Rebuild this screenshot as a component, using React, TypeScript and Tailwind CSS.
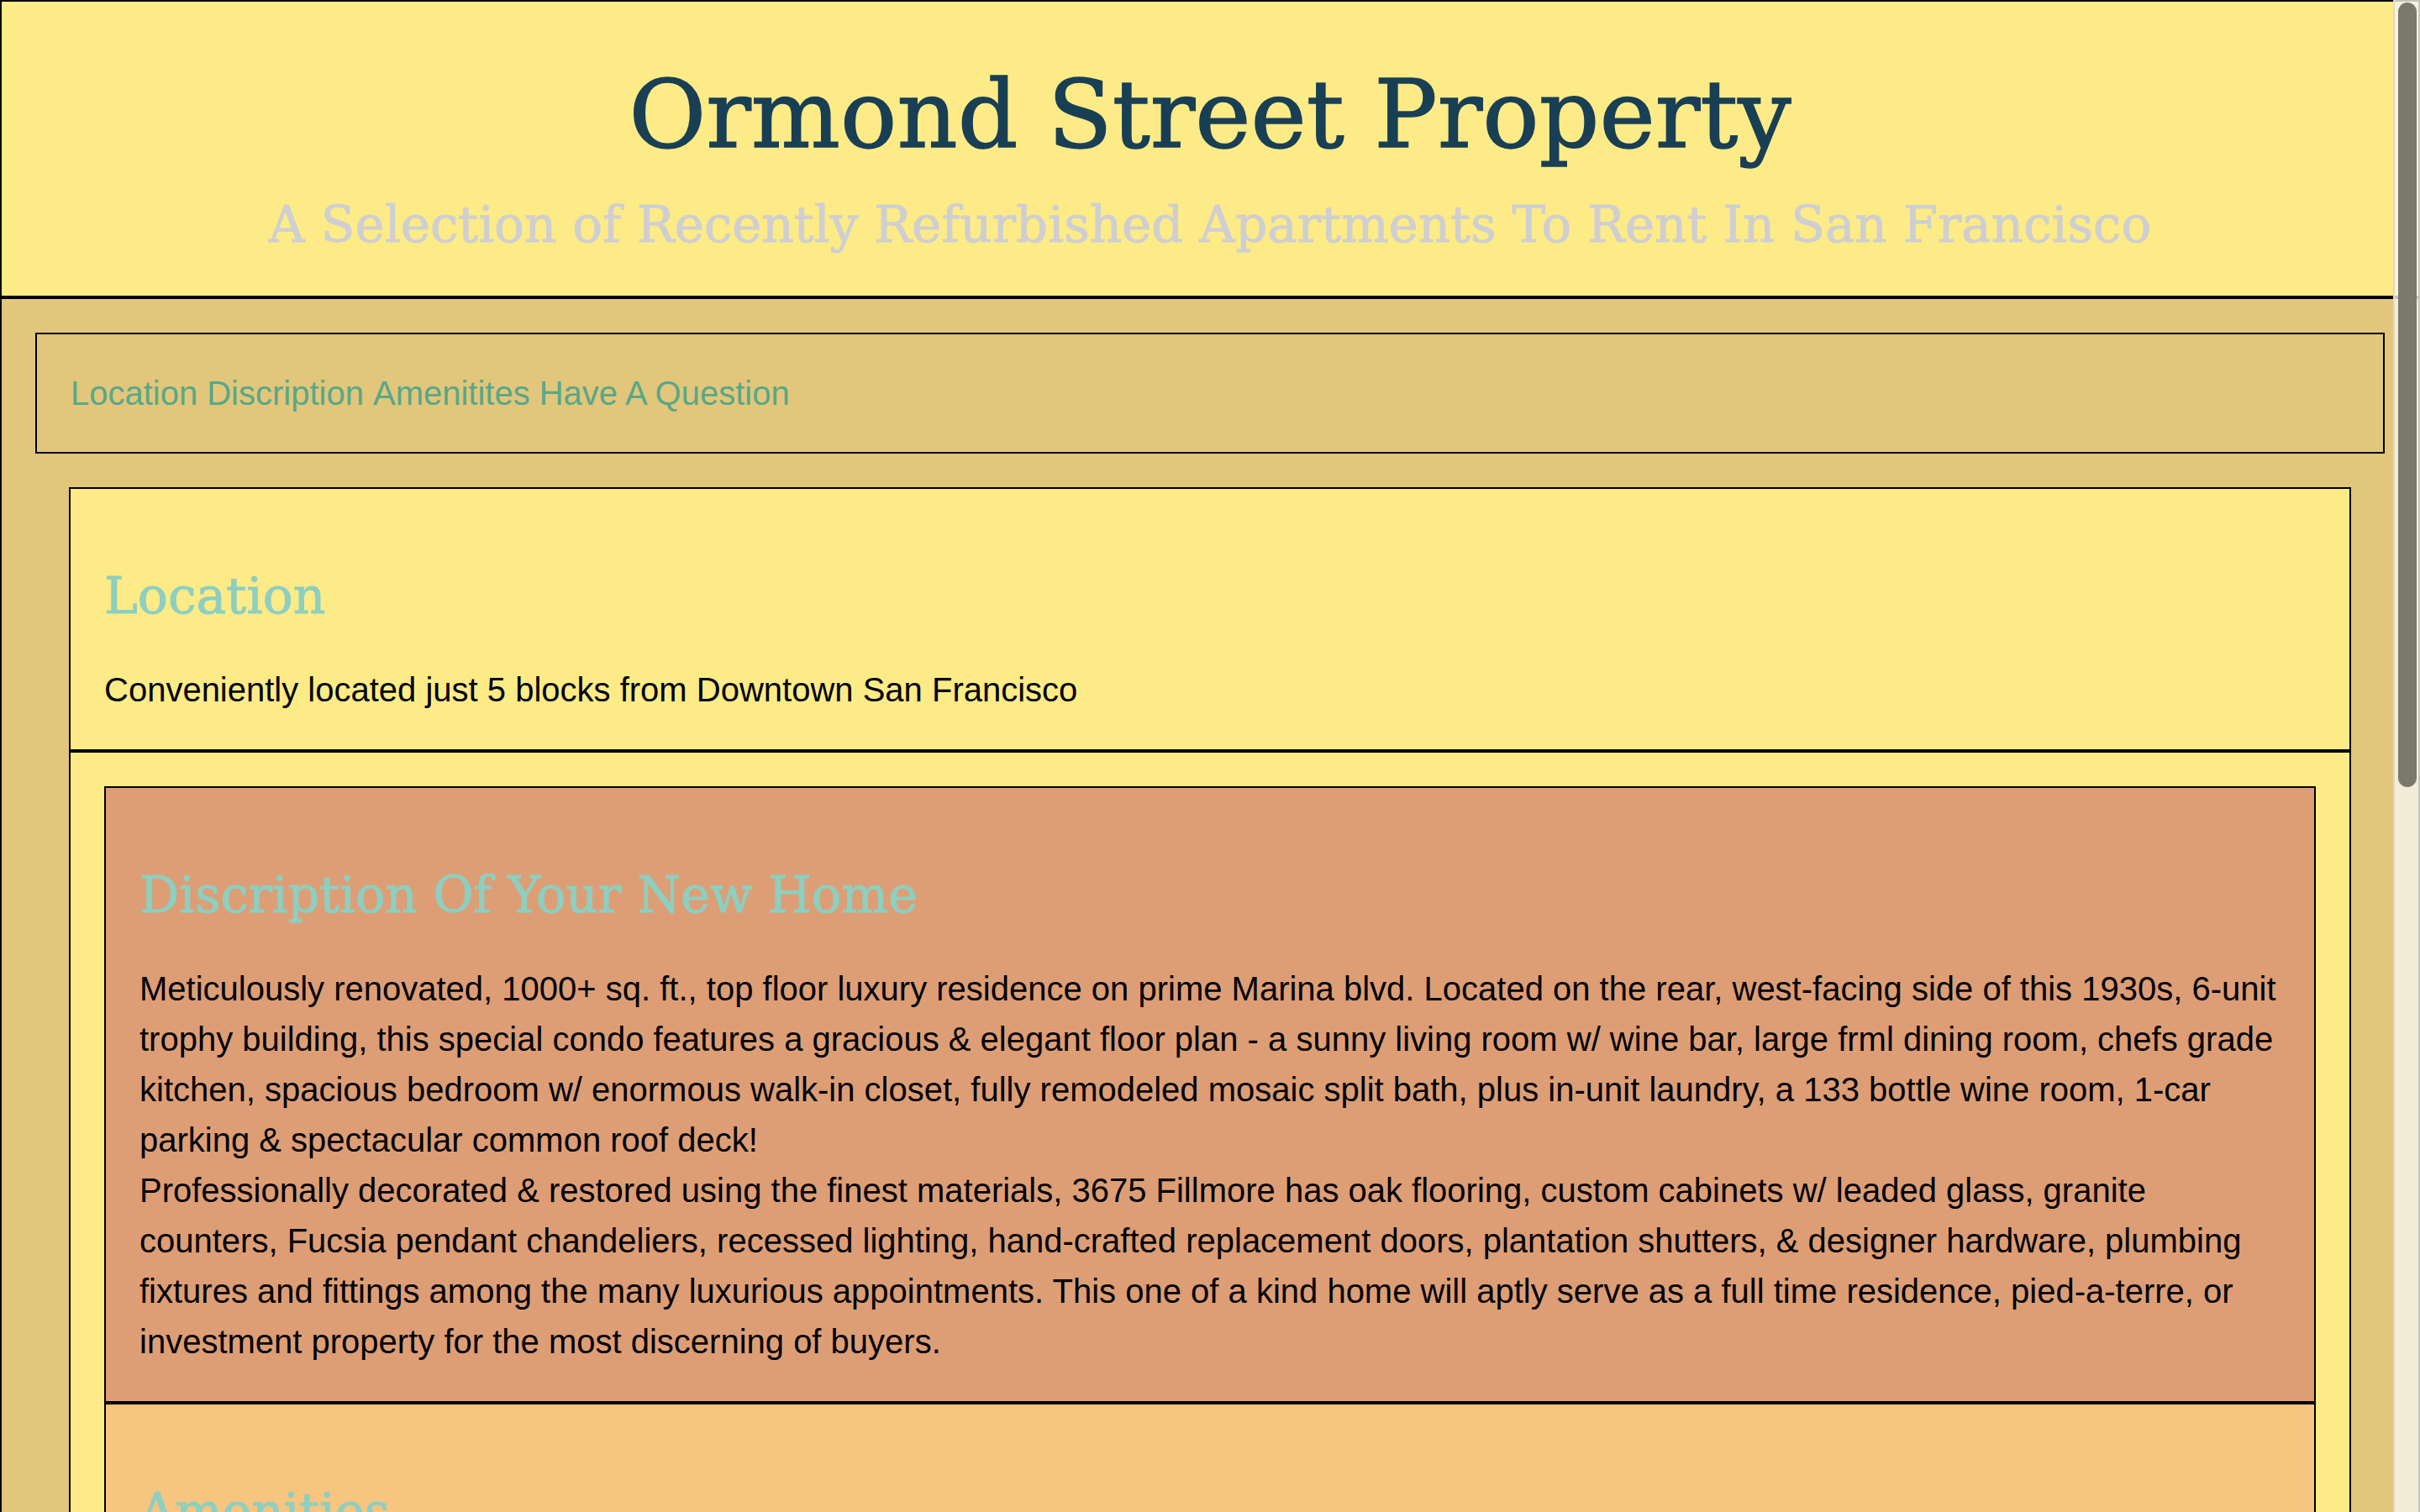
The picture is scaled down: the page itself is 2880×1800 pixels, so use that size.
const NAV = ["Location", "Discription", "Amenitites", "Have A Question"];

const AMENITIES = [
  "In-unit washer & dryer",
  "133 bottle wine room",
  "1-car parking",
  "Common roof deck",
];

function Scrollbar() {
  // overlay scrollbar drawn over the right edge, like the browser one
  return (
    <div className="fixed top-0 right-0 h-screen w-[32px] border-l-2 border-[#dcd8cc] bg-[#f8f5ef]/80">
      <div className="ml-[4px] mt-[3px] h-[934px] w-[22px] rounded-full bg-[#7b786c]" />
    </div>
  );
}

export default function App() {
  return (
    <div className="h-screen overflow-hidden font-['Liberation_Sans',Arial,sans-serif] text-[40px] text-black">
      <div className="border-2 border-black bg-[#e2c67b]">
        <header className="border-b-4 border-black bg-[#fdeb87] pt-[75px] pb-[54px] text-center font-['DejaVu_Serif',serif]">
          <h1 className="text-[112px] leading-[118px] text-[#193f55] [-webkit-text-stroke:1.5px_#193f55]">
            Ormond Street Property
          </h1>
          <h2 className="mt-[43px] text-[59.5px] leading-[60px] text-[#cfcfd2] [-webkit-text-stroke:1px_#cfcfd2]">
            A Selection of Recently Refurbished Apartments To Rent In San Francisco
          </h2>
        </header>

        <main className="px-[40px] pt-[40px]">
          <nav className="flex h-[144px] items-center gap-[11px] border-2 border-black px-[40px] text-[#58a888]">
            {NAV.map((item) => (
              <a key={item} href={"#" + item.toLowerCase()}>
                {item}
              </a>
            ))}
          </nav>

          <div className="mx-[40px] mt-[40px] border-x-2 border-t-2 border-black bg-[#fdeb87]">
            <section id="location" className="border-b-4 border-black px-[40px] pt-[97px] pb-[41px]">
              <h2 className="font-['DejaVu_Serif',serif] text-[60px] leading-[60px] text-[#8dcfc0] [-webkit-text-stroke:1px_#8dcfc0]">
                Location
              </h2>
              <p className="mt-[52px] leading-[60px]">Conveniently located just 5 blocks from Downtown San Francisco</p>
            </section>

            <div className="p-[40px]">
              <div className="border-2 border-black">
                <section id="discription" className="border-b-4 border-black bg-[#dd9e76] px-[40px] pt-[98px] pb-[41px]">
                  <h2 className="font-['DejaVu_Serif',serif] text-[59px] leading-[59px] text-[#8dcfc0] [-webkit-text-stroke:1px_#8dcfc0]">
                    Discription Of Your New Home
                  </h2>
                  <div className="mt-[52px] leading-[60px]">
                    <p>
                      Meticulously renovated, 1000+ sq. ft., top floor luxury residence on prime Marina blvd. Located on
                      the rear, west-facing side of this 1930s, 6-unit trophy building, this special condo features a
                      gracious &amp; elegant floor plan - a sunny living room w/ wine bar, large frml dining room, chefs
                      grade kitchen, spacious bedroom w/ enormous walk-in closet, fully remodeled mosaic split bath, plus
                      in-unit laundry, a 133 bottle wine room, 1-car parking &amp; spectacular common roof deck!
                    </p>
                    <p>
                      Professionally decorated &amp; restored using the finest materials, 3675 Fillmore has oak flooring,
                      custom cabinets w/ leaded glass, granite counters, Fucsia pendant chandeliers, recessed lighting,
                      hand-crafted replacement doors, plantation shutters, &amp; designer hardware, plumbing fixtures and
                      fittings among the many luxurious appointments. This one of a kind home will aptly serve as a full
                      time residence, pied-a-terre, or investment property for the most discerning of buyers.
                    </p>
                  </div>
                </section>

                <section id="amenitites" className="bg-[#f6c580] px-[40px] pt-[98px] pb-[41px]">
                  <h2 className="font-['DejaVu_Serif',serif] text-[59px] leading-[59px] text-[#8dcfc0] [-webkit-text-stroke:1px_#8dcfc0]">
                    Amenities
                  </h2>
                  <ul className="mt-[52px] list-disc pl-[60px] leading-[60px]">
                    {AMENITIES.map((a) => (
                      <li key={a}>{a}</li>
                    ))}
                  </ul>
                </section>
              </div>
            </div>
          </div>
        </main>
      </div>
      <Scrollbar />
    </div>
  );
}
